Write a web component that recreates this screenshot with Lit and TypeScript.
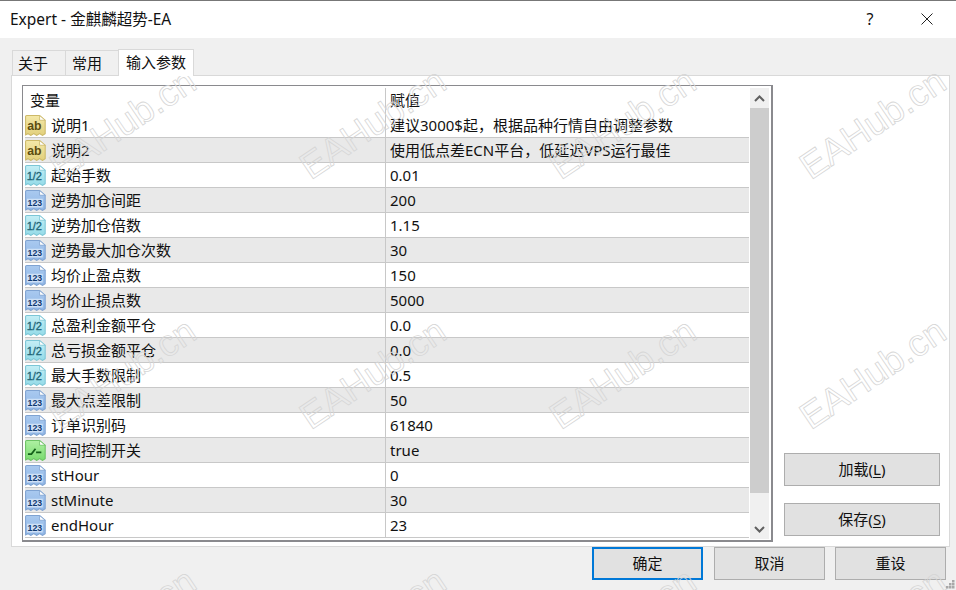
import { LitElement, html, css, svg } from "lit";
import { customElement } from "lit/decorators.js";

type Kind = "ab" | "half" | "num" | "bool";
const ROWS: [Kind, string, string][] = [
  ["ab", "说明1", "建议3000$起，根据品种行情自由调整参数"],
  ["ab", "说明2", "使用低点差ECN平台，低延迟VPS运行最佳"],
  ["half", "起始手数", "0.01"],
  ["num", "逆势加仓间距", "200"],
  ["half", "逆势加仓倍数", "1.15"],
  ["num", "逆势最大加仓次数", "30"],
  ["num", "均价止盈点数", "150"],
  ["num", "均价止损点数", "5000"],
  ["half", "总盈利金额平仓", "0.0"],
  ["half", "总亏损金额平仓", "0.0"],
  ["half", "最大手数限制", "0.5"],
  ["num", "最大点差限制", "50"],
  ["num", "订单识别码", "61840"],
  ["bool", "时间控制开关", "true"],
  ["num", "stHour", "0"],
  ["num", "stMinute", "30"],
  ["num", "endHour", "23"],
];

const PAL: Record<Kind, { a: string; b: string; s: string; t: string }> = {
  ab: { a: "#f4e8a8", b: "#e2d07c", s: "#cdb968", t: "#5c4d10" },
  half: { a: "#c4eef5", b: "#94dbe8", s: "#7cc6d6", t: "#1f6577" },
  num: { a: "#a9c9ef", b: "#8fb6e6", s: "#7fa3d2", t: "#0f3a70" },
  bool: { a: "#aef0a2", b: "#7adb70", s: "#6cc264", t: "#14601a" },
};

function icon(kind: Kind) {
  const p = PAL[kind];
  const id = `g-${kind}`;
  return html`<svg class="ico" width="21" height="21" viewBox="1.5 1 18 18">
    <defs>
      <linearGradient id=${id} x1="0" y1="0" x2="0" y2="1">
        <stop offset="0" stop-color=${p.a}></stop>
        <stop offset="1" stop-color=${p.b}></stop>
      </linearGradient>
    </defs>
    <path d="M2 2.5 Q2 1.5 3 1.5 H14 L18.8 5.5 V17 L16.5 18.5 L14 17 L11.5 18.5 L9 17 L6.5 18.5 L4 17 L2 18 Z"
      fill="url(#${id})" stroke=${p.s} stroke-width="0.9"></path>
    <path d="M14 1.5 V5.5 H18.8 Z" fill="#fff" stroke=${p.s} stroke-width="0.7"></path>
    ${kind === "bool"
      ? svg`<path d="M4 13 L7 13 L10.5 8.5 M11 11.5 L15.5 11.5" fill="none" stroke=${p.t} stroke-width="1.5"></path>`
      : kind === "num"
      ? svg`<rect x="3.2" y="8.5" width="13.5" height="7.5" fill="#dce9f9" opacity="0.8"></rect>
            <text x="10" y="15" text-anchor="middle" font-size="7.5" font-weight="700" font-family="Liberation Sans, sans-serif" fill=${p.t}>123</text>`
      : kind === "half"
      ? svg`<text x="9.5" y="14" text-anchor="middle" font-size="9.5" font-weight="400" font-family="Liberation Sans, sans-serif" stroke=${p.t} stroke-width="0.25" fill=${p.t}>1/2</text>`
      : svg`<text x="9.5" y="14" text-anchor="middle" font-size="10.5" font-weight="700" font-family="Liberation Sans, sans-serif" fill=${p.t}>ab</text>`}
  </svg>`;
}

const MARKS: [number, number][] = [];
for (let r = 0; r < 3; r++) for (let c = 0; c < 4; c++) MARKS.push([123 + c * 250, 124 + r * 250]);

@customElement("app-root")
export class AppRoot extends LitElement {
  static styles = css`
    :host {
      display: block;
      position: relative;
      width: 956px;
      height: 590px;
      overflow: hidden;
      background: #f0f0f0;
      color: #111;
      font-family: "Noto Sans", "Noto Sans CJK SC", sans-serif;
      font-size: 15px;
    }
    .win { display: flex; flex-direction: column; height: 590px; box-sizing: border-box; }
    .title {
      height: 38px; flex: none; background: #fff; display: flex; align-items: center;
      padding: 0 23px 2px 10px; font-size: 15.5px; border-top: 1px solid #777; box-sizing: border-box;
    }
    .title .t { flex: 1; }
    .help { width: 16px; text-align: center; margin-right: 43px; font-size: 16px; }
    .close { display: block; }
    .body { flex: 1; display: flex; flex-direction: column; padding: 10px 6px 0 11px; min-height: 0; }
    .tabs { display: flex; height: 27px; flex: none; align-items: flex-end; padding-left: 1px; position: relative; z-index: 1; }
    .tab {
      height: 25px; box-sizing: border-box; border: 1px solid #d9d9d9; border-bottom: 0; margin-right: -1px;
      padding: 0 0 2px; display: flex; align-items: center; background: #f0f0f0;
    }
    .tab.a1 { width: 54px; padding-left: 5px; }
    .tab.a2 { width: 54px; padding-left: 6px; }
    .tab.on { width: 76px; height: 27px; background: #fff; padding-left: 7px; margin-bottom: -1px; padding-bottom: 4px; }
    .page {
      height: 472px; flex: none; background: #fff; border: 1px solid #d9d9d9; box-sizing: border-box;
      display: flex; padding: 9px 0 0 10px; width: 939px;
    }
    .grid {
      width: 751px; height: 457px; flex: none; box-sizing: border-box;
      border-style: solid; border-width: 1px 2px 2px 1px;
      border-color: #8a8a8e; padding: 2px 2px 0 2px; display: flex; background: #fff;
    }
    .list { flex: 1; min-width: 0; }
    .row { display: flex; height: 25px; box-sizing: border-box; border-bottom: 1px solid #c8c8c8; }
    .row.alt { background: #e9e9e9; }
    .row.head { border-bottom: 0; }
    .cell1 { width: 361px; flex: none; display: flex; align-items: center; border-right: 1px solid #c8c8c8; box-sizing: border-box; }
    .cell1 span { padding-bottom: 1px; }
    .head .cell1 { padding-left: 5px; padding-bottom: 2px; }
    .head .cell2 { padding-bottom: 2px; padding-left: 4px; }
    .cell2 { flex: 1; display: flex; align-items: center; padding: 0 0 1px 4px; white-space: nowrap; }
    .ico { flex: none; margin-right: 5px; }
    .sb { width: 19px; flex: none; display: flex; flex-direction: column; background: #f0f0f0; height: 451px; border-left: 1px solid #fff; }
    .sb .arrow { height: 20px; flex: none; display: flex; align-items: center; justify-content: center; }
    .sb .thumb { height: 385px; flex: none; background: #cdcdcd; }
    .sb .rest { flex: 1; }
    .side { flex: 1; display: flex; flex-direction: column; padding-left: 11px; }
    .btn {
      box-sizing: border-box; background: #e1e1e1; border: 1px solid #adadad; display: flex;
      align-items: center; justify-content: center; height: 33px; flex: none; padding-bottom: 2px;
    }
    .btn u { text-underline-offset: 2px; }
    .side .btn { width: 156px; }
    .side .load { margin-top: 368px; }
    .side .save { margin-top: 17px; }
    .foot { display: flex; justify-content: flex-end; gap: 10px; padding-right: 4px; }
    .foot .btn { width: 111px; height: 33px; }
    .foot .def { border: 2px solid #0078d7; margin-right: 1px; }
    .grip { position: absolute; right: 1px; bottom: 1px; display: block; }
    .wm-layer { position: absolute; inset: 0; pointer-events: none; overflow: hidden; }
    .wm {
      position: absolute; white-space: nowrap; font-family: "Liberation Sans", sans-serif; font-size: 37px;
      color: transparent; -webkit-text-stroke: 0.8px #d6d6d6; transform: translate(-50%, -50%) rotate(-34deg);
    }
  `;

  render() {
    return html`
      <div class="win">
        <div class="title">
          <span class="t">Expert - 金麒麟超势-EA</span>
          <span class="help">?</span>
          <svg class="close" width="12" height="12" viewBox="0 0 12 12"><path d="M0.5 0.5 L11.5 11.5 M11.5 0.5 L0.5 11.5" stroke="#222" stroke-width="1"></path></svg>
        </div>
        <div class="body">
          <div class="tabs">
            <div class="tab a1">关于</div>
            <div class="tab a2">常用</div>
            <div class="tab on">输入参数</div>
          </div>
          <div class="page">
            <div class="grid">
              <div class="list">
                <div class="row head"><div class="cell1">变量</div><div class="cell2">赋值</div></div>
                ${ROWS.map(
                  (r, i) => html`<div class="row ${i % 2 ? "alt" : ""}">
                    <div class="cell1">${icon(r[0])}<span>${r[1]}</span></div>
                    <div class="cell2">${r[2]}</div>
                  </div>`
                )}
              </div>
              <div class="sb">
                <div class="arrow"><svg width="11" height="7" viewBox="0 0 11 7"><path d="M1 6 L5.5 1.5 L10 6" fill="none" stroke="#606060" stroke-width="2"></path></svg></div>
                <div class="thumb"></div>
                <div class="rest"></div>
                <div class="arrow"><svg width="11" height="7" viewBox="0 0 11 7"><path d="M1 1 L5.5 5.5 L10 1" fill="none" stroke="#606060" stroke-width="2"></path></svg></div>
              </div>
            </div>
            <div class="side">
              <div class="btn load"><span>加载(<u>L</u>)</span></div>
              <div class="btn save"><span>保存(<u>S</u>)</span></div>
            </div>
          </div>
          <div class="foot">
            <div class="btn def">确定</div>
            <div class="btn">取消</div>
            <div class="btn">重设</div>
          </div>
        </div>
        <div class="wm-layer">
          ${MARKS.map(([x, y]) => html`<div class="wm" style="left:${x}px;top:${y}px">EAHub.cn</div>`)}
        </div>
        <svg class="grip" width="9" height="9" viewBox="0 0 9 9" fill="#a8a8a8"><rect x="6" y="0" width="2.5" height="2.5"></rect><rect x="3" y="3" width="2.5" height="2.5"></rect><rect x="6" y="3" width="2.5" height="2.5"></rect><rect x="0" y="6" width="2.5" height="2.5"></rect><rect x="3" y="6" width="2.5" height="2.5"></rect><rect x="6" y="6" width="2.5" height="2.5"></rect></svg>
      </div>
    `;
  }
}
